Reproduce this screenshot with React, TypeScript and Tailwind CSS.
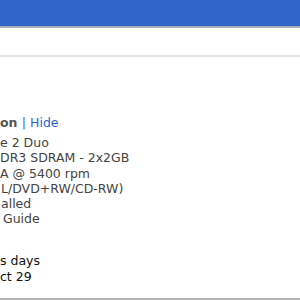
export default function App() {
  const specs = [
    { text: "e 2 Duo", pad: "pl-0" },
    { text: "DR3 SDRAM - 2x2GB", pad: "pl-0" },
    { text: "A @ 5400 rpm", pad: "pl-0" },
    { text: "L/DVD+RW/CD-RW)", pad: "pl-px" },
    { text: "alled", pad: "pl-px" },
    { text: "Guide", pad: "pl-[3px]" },
  ];

  return (
    <div className="w-[300px] h-[300px] overflow-hidden bg-white flex flex-col font-['DejaVu_Sans',sans-serif] text-[12.5px] leading-[15.2px]">
      <div className="h-[28px] bg-[#3165c9] border-b-2 border-[#a6adbb] shrink-0" />
      <div className="h-[29px] border-b-2 border-[#e2e2e2] shrink-0" />

      <div className="pt-[58px] flex flex-col">
        <div className="text-[#555] font-bold">
          on <span className="font-normal text-[#2e5fd0]">| Hide</span>
        </div>
        <ul className="pt-[5px] text-[#444]">
          {specs.map((s) => (
            <li key={s.text} className={s.pad}>
              {s.text}
            </li>
          ))}
        </ul>
        <div className="pt-[27px] text-[#111]">
          <p>s days</p>
          <p>ct 29</p>
        </div>
      </div>

      <div className="mt-auto h-[2px] bg-[#b5b5b5] shrink-0" />
    </div>
  );
}
